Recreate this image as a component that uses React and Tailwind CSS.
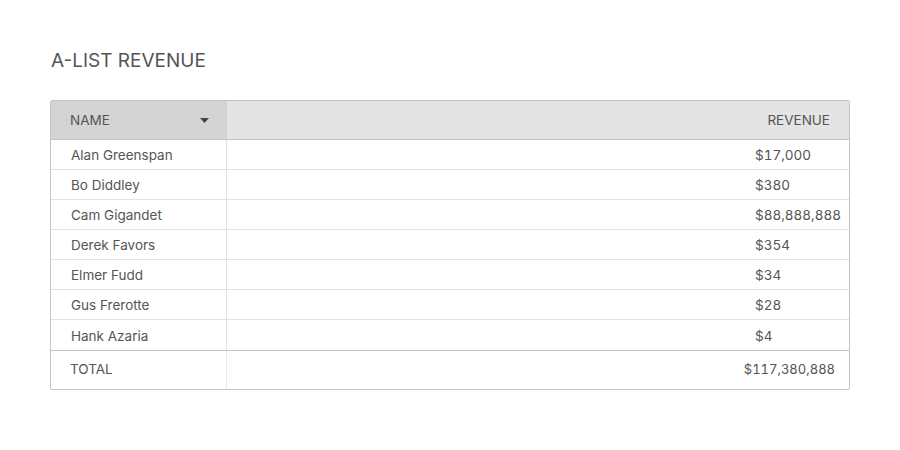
import React from 'react';

const rows = [
  { name: 'Alan Greenspan', revenue: '$17,000' },
  { name: 'Bo Diddley', revenue: '$380' },
  { name: 'Cam Gigandet', revenue: '$88,888,888' },
  { name: 'Derek Favors', revenue: '$354' },
  { name: 'Elmer Fudd', revenue: '$34' },
  { name: 'Gus Frerotte', revenue: '$28' },
  { name: 'Hank Azaria', revenue: '$4' },
];

const App = () => {
  return (
    <div className="w-[900px] h-[450px] bg-white px-[50px] pt-[49px] font-['Inter',sans-serif] text-[#555]">
      <h1 className="pl-px text-[19px] leading-[24px] text-[#555]">A-LIST REVENUE</h1>

      <div className="mt-[27px] w-[800px] border border-[#c4c4c4] rounded-[2px] text-[13.5px]">
        {/* Header */}
        <div className="flex h-[39px] border-b border-[#c4c4c4]">
          <div className="w-[176px] bg-[#d4d4d4] flex items-center justify-between pl-[19px] pr-[18px]">
            <span>NAME</span>
            <svg width="9" height="5" viewBox="0 0 9 5">
              <path d="M0 0 H9 L4.5 5 Z" fill="#444" />
            </svg>
          </div>
          <div className="flex-1 bg-[#e4e4e4] flex items-center justify-end pr-[19px]">
            REVENUE
          </div>
        </div>

        {/* Body */}
        {rows.map((row, i) => (
          <div
            key={row.name}
            className={`flex h-[30px] ${i < rows.length - 1 ? 'border-b border-[#e2e2e2]' : ''}`}
          >
            <div className="w-[176px] border-r border-[#e2e2e2] flex items-center pl-[20px] pt-[2px]">
              {row.name}
            </div>
            <div className="flex-1 flex items-center justify-end pr-[5px] pt-[2px]">
              <div className="w-[89px] tabular-nums">{row.revenue}</div>
            </div>
          </div>
        ))}

        {/* Total */}
        <div className="flex h-[39px] border-t border-[#c4c4c4]">
          <div className="w-[176px] border-r border-[#ececec] flex items-center pl-[19px] pb-px">
            TOTAL
          </div>
          <div className="flex-1 flex items-center justify-end pr-[14px] text-[13px] tabular-nums">$117,380,888</div>
        </div>
      </div>
    </div>
  );
};

export default App;
